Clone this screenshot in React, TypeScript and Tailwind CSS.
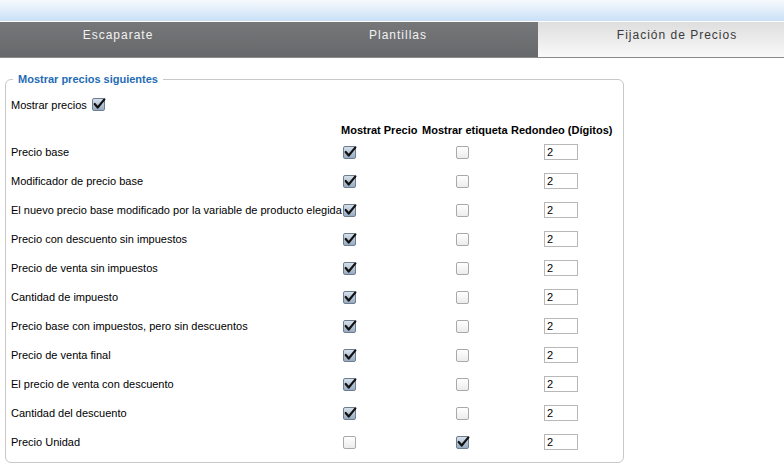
import React from "react";

const rows: { label: string; a: boolean; b: boolean }[] = [
  { label: "Precio base", a: true, b: false },
  { label: "Modificador de precio base", a: true, b: false },
  { label: "El nuevo precio base modificado por la variable de producto elegida", a: true, b: false },
  { label: "Precio con descuento sin impuestos", a: true, b: false },
  { label: "Precio de venta sin impuestos", a: true, b: false },
  { label: "Cantidad de impuesto", a: true, b: false },
  { label: "Precio base con impuestos, pero sin descuentos", a: true, b: false },
  { label: "Precio de venta final", a: true, b: false },
  { label: "El precio de venta con descuento", a: true, b: false },
  { label: "Cantidad del descuento", a: true, b: false },
  { label: "Precio Unidad", a: false, b: true },
];

function Box({ checked }: { checked: boolean }) {
  if (checked) {
    return (
      <span className="relative inline-block h-[13px] w-[13px] shrink-0 rounded-[2px] border border-[#6d7d8f] bg-gradient-to-b from-[#d5e0eb] to-[#98abc0]">
        <svg viewBox="0 0 13 13" className="absolute left-[-1px] top-[-2px] h-[14px] w-[14px]">
          <path d="M2.5 6.5 L5.3 9.8 L11.5 2.2" fill="none" stroke="#111" strokeWidth="2" strokeLinecap="round" strokeLinejoin="round" />
        </svg>
      </span>
    );
  }
  return (
    <span className="inline-block h-[13px] w-[13px] shrink-0 rounded-[2px] border border-[#a9a9a9] bg-gradient-to-b from-white to-[#ececec]" />
  );
}

export default function App() {
  return (
    <div className="h-[473px] w-[784px] overflow-hidden bg-white text-[11px] text-black" style={{ fontFamily: '"Liberation Sans", Arial, sans-serif' }}>
      <div className="h-[21px] bg-gradient-to-b from-[#f7fafd] to-[#c9e0f7]" />
      <div className="h-px bg-white" />
      <div className="flex h-[36px] border-b border-[#8a8a8a] bg-gradient-to-b from-[#767779] to-[#67686b]">
        <div className="flex w-[236px] items-start justify-center pt-[4px] text-[12px] tracking-[1px] text-[#f2f2f2]">Escaparate</div>
        <div className="flex w-[302px] items-start justify-center pl-[22px] pt-[4px] text-[12px] tracking-[1px] text-[#f2f2f2]">Plantillas</div>
        <div className="flex flex-1 items-start justify-center pl-[32px] pt-[4px] text-[12px] tracking-[1px] text-[#3a3a3a] bg-gradient-to-b from-[#dedede] to-[#f9f9f9]">Fijación de Precios</div>
      </div>
      <fieldset className="ml-[5px] mt-[13px] h-[392px] w-[619px] rounded-[6px] border border-[#c8c8c8] pl-[5px]">
        <legend className="ml-[2px] px-[5px] text-[11px] font-bold text-[#1f6cb4]">Mostrar precios siguientes</legend>
        <div className="mt-[9px] flex items-center gap-[5px]">
          <span>Mostrar precios</span>
          <Box checked />
        </div>
        <div className="mt-[9px] grid grid-cols-[330px_81px_89px_104px] font-bold">
          <div />
          <div>Mostrat Precio</div>
          <div>Mostrar etiqueta</div>
          <div>Redondeo (Dígitos)</div>
        </div>
        <div className="mt-[5px] flex flex-col gap-[12px]">
          {rows.map((r) => (
            <div key={r.label} className="grid h-[17px] grid-cols-[330px_81px_89px_104px] items-center">
              <div className="whitespace-nowrap">{r.label}</div>
              <div className="flex pl-[2px]"><Box checked={r.a} /></div>
              <div className="flex pl-[34px]"><Box checked={r.b} /></div>
              <div className="flex pl-[33px]">
                <div className="flex h-[16px] w-[34px] items-center border border-[#b8b8b8] pl-[2px] text-[11px]">2</div>
              </div>
            </div>
          ))}
        </div>
      </fieldset>
    </div>
  );
}
